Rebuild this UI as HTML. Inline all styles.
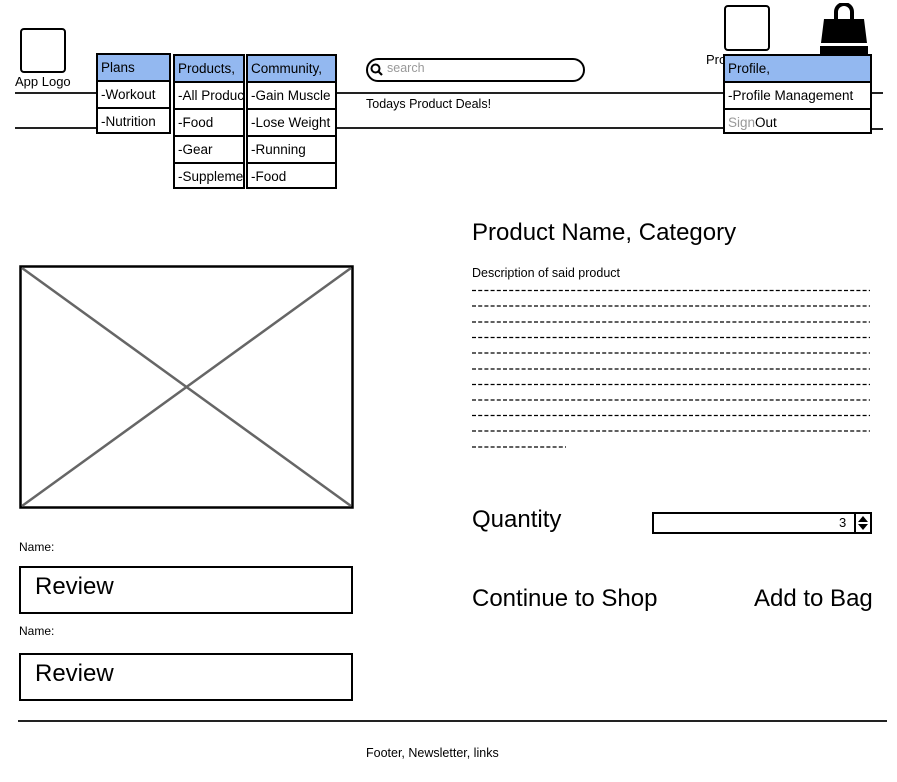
<!DOCTYPE html>
<html><head><meta charset="utf-8"><style>
*{margin:0;padding:0;box-sizing:border-box}
body{width:897px;height:782px;background:#fff;position:relative;overflow:hidden;font-family:"Liberation Sans",sans-serif;color:#000}
.a{position:absolute;white-space:nowrap}
.box{position:absolute;border:2px solid #000;background:#fff}
.menu{position:absolute;border:2.5px solid #000;background:#fff;overflow:hidden}
.menu div{height:27px;line-height:25px;font-size:13.5px;padding-left:3px;border-bottom:2px solid #000;white-space:nowrap;overflow:hidden}
.menu div:last-child{border-bottom:none}
.menu .h{background:#93b8f0}
.hl{position:absolute;height:2px;background:#222}
</style></head><body>

<div class="box" style="left:20px;top:28px;width:46px;height:45px;border-radius:4px"></div>
<div class="a" style="left:15px;top:74px;font-size:13px">App Logo</div>

<div class="hl" style="left:15px;top:92px;width:83px"></div>
<div class="hl" style="left:15px;top:127px;width:83px"></div>
<div class="hl" style="left:334px;top:92px;width:392px"></div>
<div class="hl" style="left:334px;top:127px;width:392px"></div>
<div class="hl" style="left:869px;top:92px;width:14px"></div>
<div class="hl" style="left:869px;top:128px;width:14px"></div>

<div class="menu" style="left:96px;top:53px;width:75px;height:81px">
<div class="h">Plans</div><div>-Workout</div><div>-Nutrition</div></div>
<div class="menu" style="left:173px;top:54px;width:72px;height:135px">
<div class="h">Products,</div><div>-All Products</div><div>-Food</div><div>-Gear</div><div>-Supplements</div></div>
<div class="menu" style="left:246px;top:54px;width:91px;height:135px">
<div class="h">Community,</div><div>-Gain Muscle</div><div>-Lose Weight</div><div>-Running</div><div>-Food</div></div>

<div class="box" style="left:366px;top:58px;width:219px;height:24px;border-radius:12px"></div>
<svg class="a" style="left:370px;top:63px" width="14" height="14" viewBox="0 0 14 14"><circle cx="5.5" cy="5.5" r="4" fill="none" stroke="#000" stroke-width="2"/><path d="M8.5 8.5L12 12" stroke="#000" stroke-width="2.2"/></svg>
<div class="a" style="left:387px;top:61px;font-size:12.5px;color:#999">search</div>
<div class="a" style="left:366px;top:97px;font-size:12.5px">Todays Product Deals!</div>

<div class="box" style="left:724px;top:5px;width:46px;height:46px;border-radius:4px"></div>
<div class="a" style="left:706px;top:52px;font-size:13px">Pro</div>
<svg class="a" style="left:818px;top:3px" width="52" height="52" viewBox="0 0 52 52"><path d="M18 20V9a8 8 0 0 1 16 0v11" fill="none" stroke="#000" stroke-width="4"/><path d="M6 16h40l3 24H3z" fill="#000"/><rect x="2" y="43" width="48" height="9" fill="#000"/></svg>

<div class="menu" style="left:723px;top:54px;width:149px;height:80px">
<div class="h">Profile,</div><div>-Profile Management</div><div><span style="color:#999">Sign</span>Out</div></div>

<div class="a" style="left:472px;top:219px;font-size:24px">Product Name, Category</div>

<svg class="a" style="left:19px;top:265px" width="335" height="244"><rect x="1.5" y="1.5" width="332" height="241" fill="#fff" stroke="#000" stroke-width="2.5"/><path d="M3 3L332 241M332 3L3 241" stroke="#666" stroke-width="2.5"/></svg>

<div class="a" style="left:472px;top:266px;font-size:12.5px">Description of said product</div>
<svg class="a" style="left:472px;top:285px" width="400" height="170">
<g stroke="#000" stroke-width="1.2" stroke-dasharray="4 2.2">
<path d="M0 5.5H398M0 21H398M0 37H398M0 52.5H398M0 68H398M0 84H398M0 99.5H398M0 115H398M0 130.5H398M0 146H398M0 162H94"/></g></svg>

<div class="a" style="left:472px;top:506px;font-size:24px">Quantity</div>
<div class="box" style="left:652px;top:512px;width:220px;height:22px"></div>
<div class="a" style="left:839px;top:515px;font-size:13px">3</div>
<div class="a" style="left:854px;top:512px;width:2px;height:22px;background:#000"></div>
<svg class="a" style="left:857px;top:515px" width="12" height="16"><path d="M6 1L11 7H1z M6 15L11 9H1z" fill="#000"/></svg>

<div class="a" style="left:472px;top:585px;font-size:24px">Continue to Shop</div>
<div class="a" style="left:754px;top:585px;font-size:24px">Add to Bag</div>

<div class="a" style="left:19px;top:540px;font-size:12px">Name:</div>
<div class="box" style="left:19px;top:566px;width:334px;height:48px;border-width:2.5px"></div>
<div class="a" style="left:35px;top:573px;font-size:24px">Review</div>
<div class="a" style="left:19px;top:624px;font-size:12px">Name:</div>
<div class="box" style="left:19px;top:653px;width:334px;height:48px;border-width:2.5px"></div>
<div class="a" style="left:35px;top:660px;font-size:24px">Review</div>

<div class="hl" style="left:18px;top:720px;width:869px"></div>
<div class="a" style="left:366px;top:746px;font-size:12.5px">Footer, Newsletter, links</div>
</body></html>
